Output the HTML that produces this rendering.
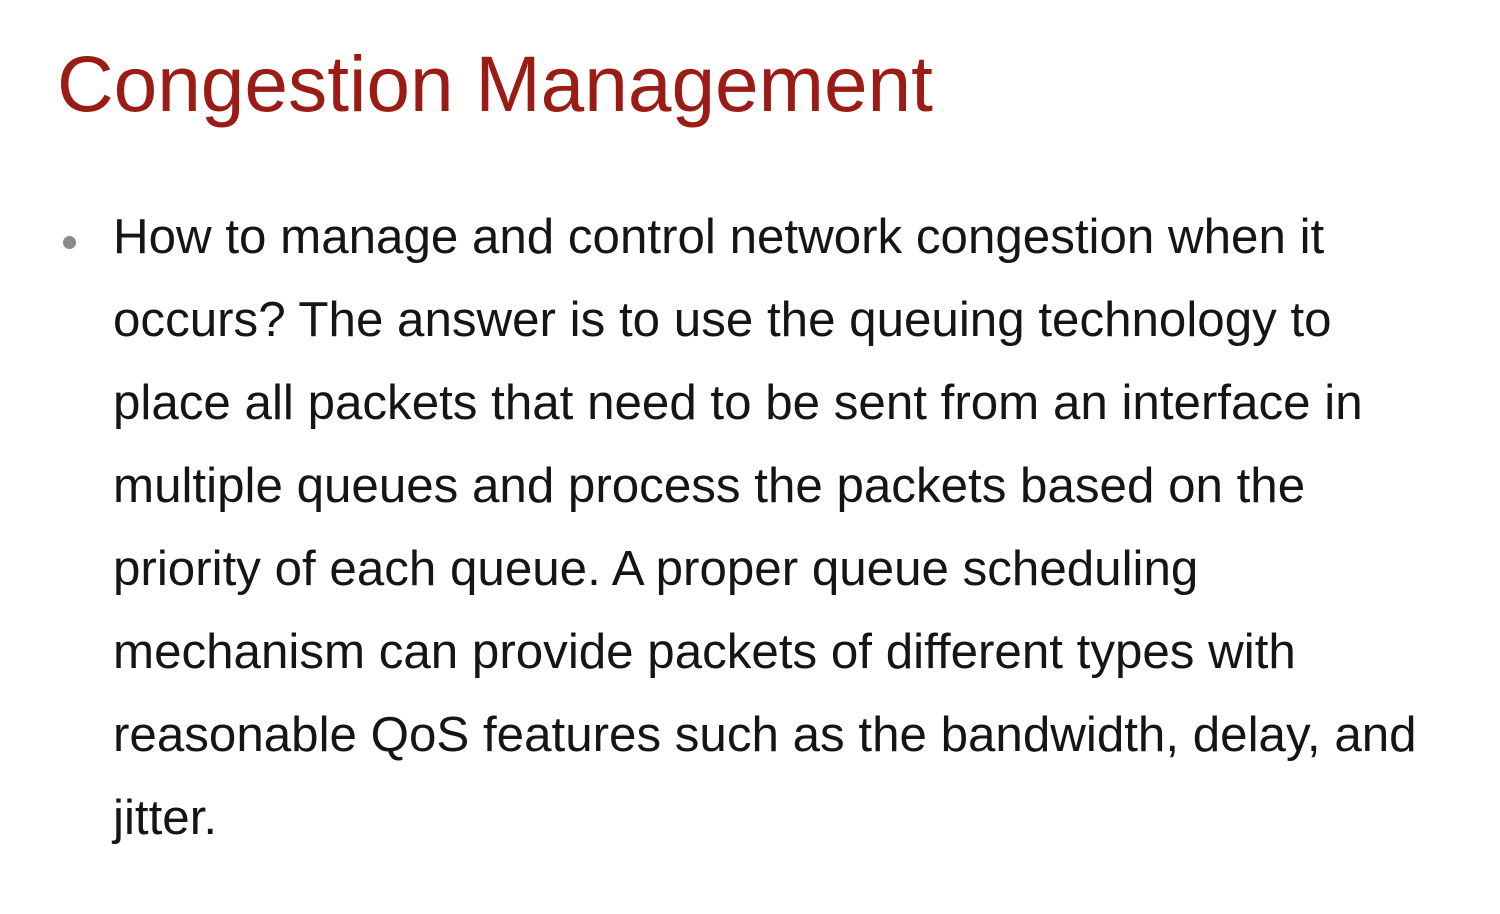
<!DOCTYPE html>
<html><head><meta charset="utf-8"><style>
html,body{margin:0;padding:0;background:#fff;width:1500px;height:914px;overflow:hidden}
body{position:relative;font-family:"Liberation Sans",Arial,sans-serif}
h1{position:absolute;left:57px;top:45px;margin:0;font-weight:normal;font-size:78.4px;line-height:79px;color:#9b1b15;white-space:nowrap}
.b{position:absolute;left:113px;top:195px;font-size:49.3px;line-height:83px;color:#151515;white-space:nowrap}
.dot{position:absolute;left:63px;top:236px;width:13px;height:13px;border-radius:50%;background:#8a8a8a}
</style></head><body>
<h1>Congestion Management</h1>
<div class="dot"></div>
<div class="b">How to manage and control network congestion when it<br>occurs? The answer is to use the queuing technology to<br>place all packets that need to be sent from an interface in<br>multiple queues and process the packets based on the<br>priority of each queue. A proper queue scheduling<br>mechanism can provide packets of different types with<br>reasonable QoS features such as the bandwidth, delay, and<br>jitter.</div>
</body></html>
